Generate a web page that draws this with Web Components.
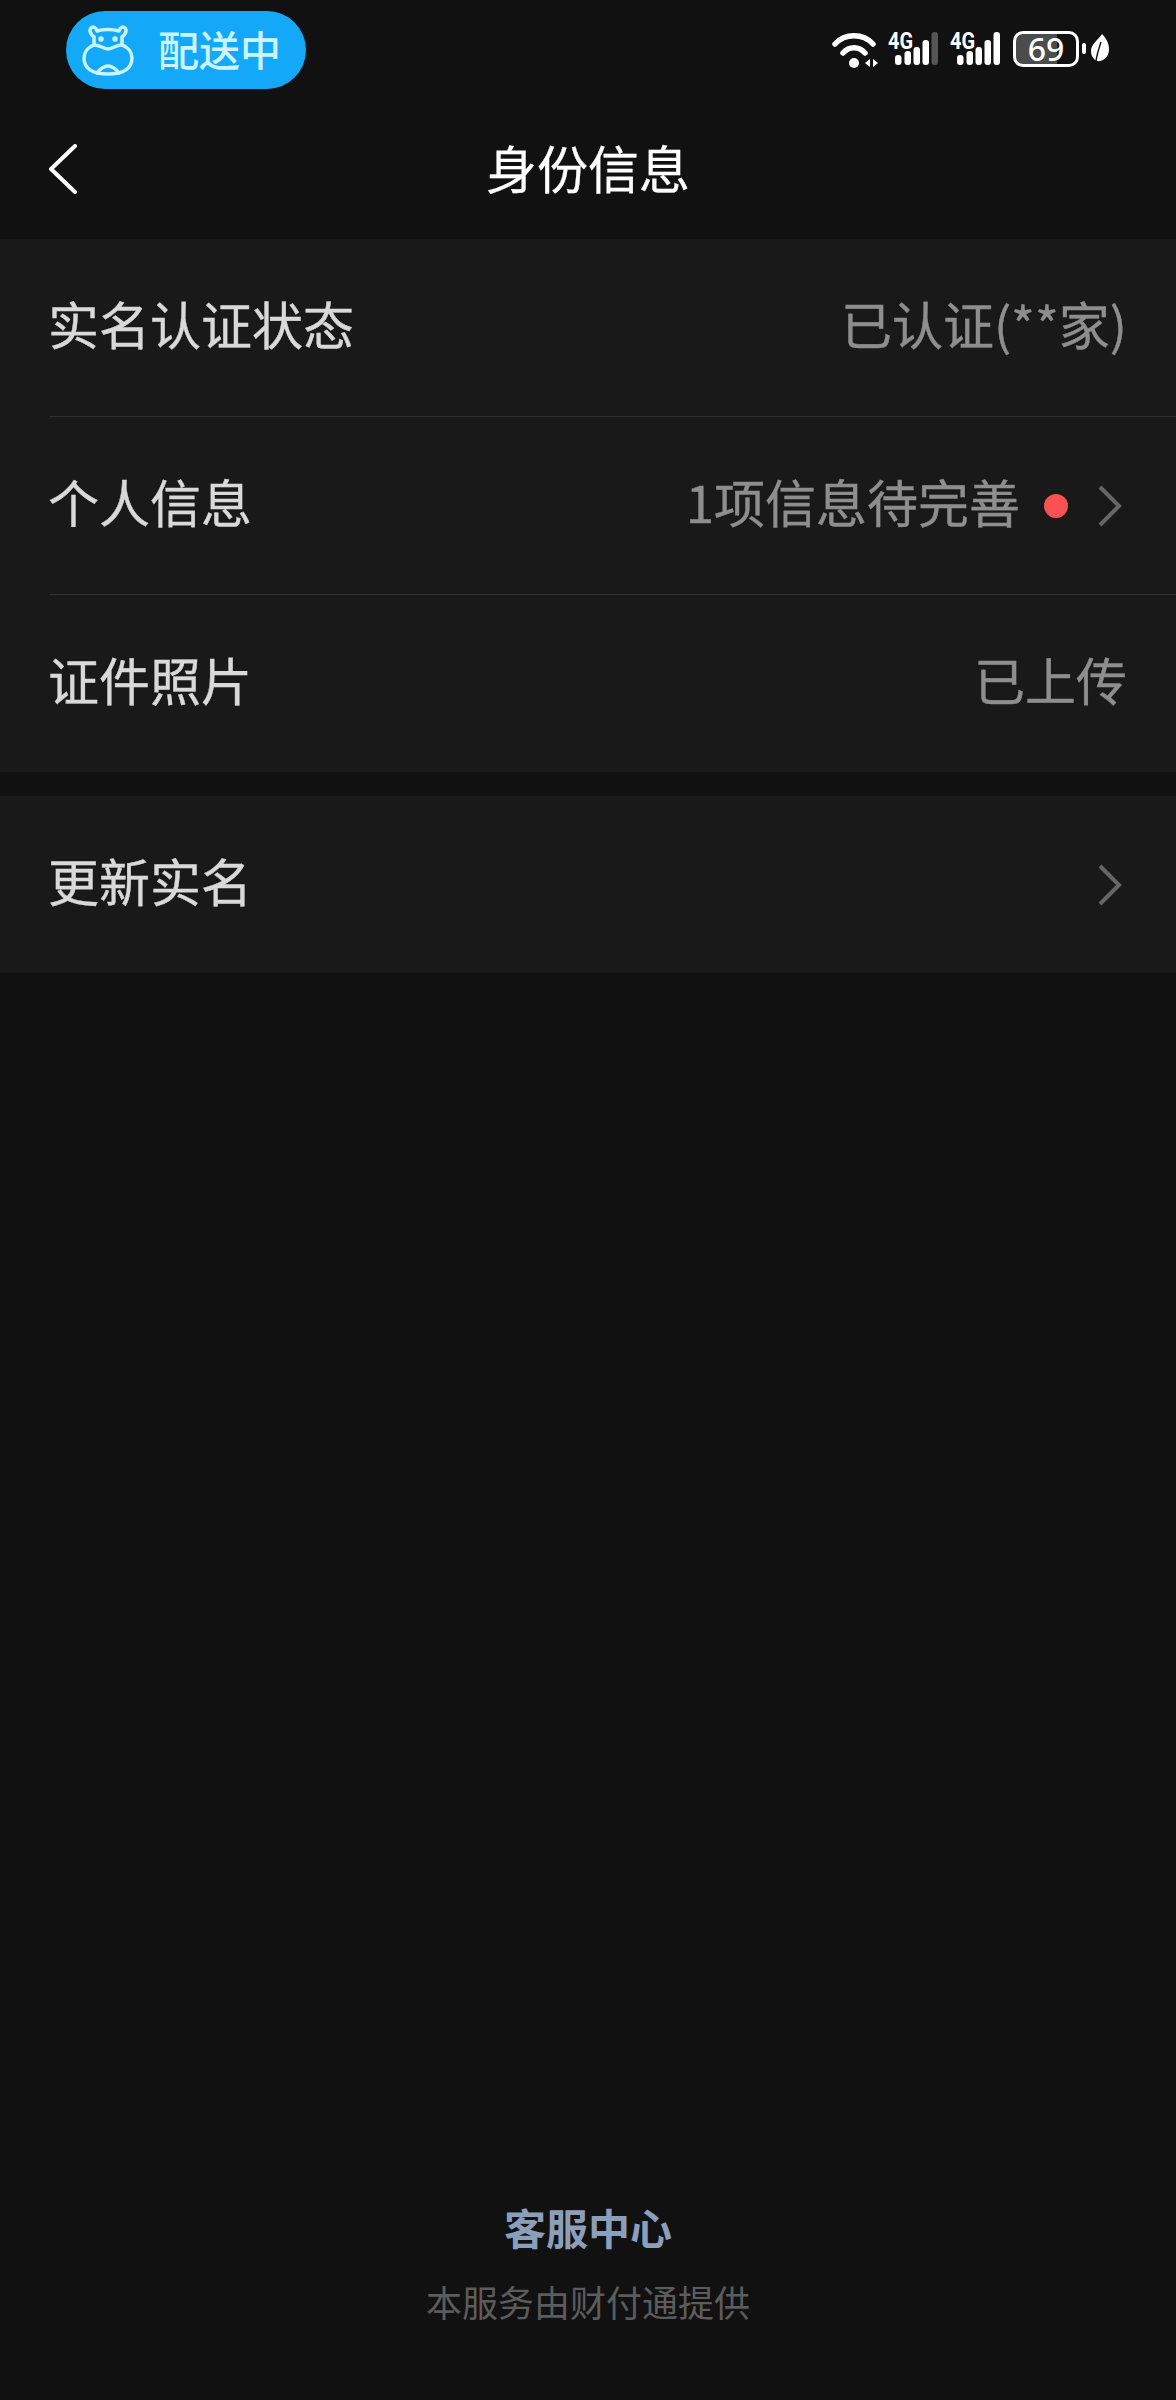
<!DOCTYPE html>
<html lang="zh">
<head>
<meta charset="utf-8">
<title>身份信息</title>
<style>
  html, body { margin: 0; background: #111112; }
  body { font-family: "Noto Sans CJK SC", "Liberation Sans", sans-serif; }
</style>
</head>
<body>
<app-page>
  <status-bar></status-bar>
  <nav-bar>身份信息</nav-bar>
  <info-card>
    <info-row label="实名认证状态">已认证(**家)</info-row>
    <info-row label="个人信息" dot arrow>1项信息待完善</info-row>
    <info-row label="证件照片" last>已上传</info-row>
  </info-card>
  <info-card>
    <info-row label="更新实名" arrow last></info-row>
  </info-card>
  <page-footer></page-footer>
</app-page>

<script>
/**
 * Outer page column.
 */
customElements.define('app-page',
  class extends HTMLElement {
    constructor () {
      super()
      this.attachShadow({ mode: 'open' }).innerHTML = `
        <style>
          :host { display: flex; flex-direction: column; height: 2400px; background: #111112; overflow: hidden; }
        </style>
        <slot></slot>`
    }
  }
)

/**
 * Phone status bar with the delivery pill and the signal icons.
 */
const signalBars = (lastColor) => `
  <svg width="52" height="42" viewBox="0 -6 52 42" style="display:block;margin-top:-6px">
    <text x="0" y="18" font-family="Roboto, sans-serif" font-size="23" font-weight="700" fill="#fff" textLength="25" lengthAdjust="spacingAndGlyphs">4G</text>
    <rect x="7" y="24" width="6.5" height="10" rx="3" fill="#fff"/>
    <rect x="16.5" y="20" width="6.5" height="14" rx="3" fill="#fff"/>
    <rect x="25.5" y="16" width="6.5" height="18" rx="3" fill="#fff"/>
    <rect x="34.5" y="9" width="6.5" height="25" rx="3" fill="#fff"/>
    <rect x="43.5" y="1" width="6.5" height="33" rx="3" fill="${lastColor}"/>
  </svg>`

customElements.define('status-bar',
  class extends HTMLElement {
    constructor () {
      super()
      this.attachShadow({ mode: 'open' }).innerHTML = `
        <style>
          :host { display: flex; justify-content: space-between; align-items: flex-start; height: 100px; box-sizing: border-box; padding: 11px 67px 0 66px; }
          .pill { display: flex; align-items: center; box-sizing: border-box; width: 240px; height: 78px; padding-left: 16px; border-radius: 39px; background: #14a9f8; color: #cdf4ff; font-size: 41px; font-weight: 500; }
          .pill svg { margin-right: 24px; }
          .pill span { padding-bottom: 5px; }
          .icons { display: flex; align-items: flex-start; padding-top: 20px; }
          .wifi { margin-right: 9px; margin-top: 1px; }
          .sim { margin-right: 10px; }
          .battery { position: relative; box-sizing: border-box; width: 66px; height: 36px; border: 3px solid #fff; border-radius: 10px; background: linear-gradient(90deg, #4c4c4c 69%, #111112 69%); color: #fff; font-family: "Noto Sans", sans-serif; font-size: 32px; font-weight: 500; line-height: 29px; text-align: center; }
          .nub { width: 4px; height: 11px; margin: 12px 5px 0 3px; border-radius: 2px; background: #fff; }
          .leaf { margin-top: 3px; }
        </style>
        <div class="pill">
          <svg width="52" height="52" viewBox="0 0 52 52" fill="none" stroke="#c8f4ff" stroke-width="3.5" stroke-linejoin="round" stroke-linecap="round">
            <path d="M12 21 V13 C8 10 7 6 9 4 C11 2 14 3 15 7 C21 5 31 5 37 7 C38 3 41 2 43 4 C45 6 44 10 40 13 V21"/>
            <path d="M12 21 C6 23 2 28 2 34 C2 44 10 50 26 50 C42 50 50 44 50 34 C50 28 46 23 40 21 C36 20 31 25 26 25 C21 25 16 20 12 21 Z"/>
            <path d="M15 49 C19 44 22 42 26 42 C30 42 33 44 37 49"/>
            <circle cx="19" cy="15" r="2" fill="#c8f4ff" stroke-width="1.5"/>
            <circle cx="33" cy="15" r="2" fill="#c8f4ff" stroke-width="1.5"/>
          </svg>
          <span>配送中</span>
        </div>
        <div class="icons">
          <svg class="wifi" width="47" height="36" viewBox="0 0 47 36" fill="none" stroke="#fff" stroke-width="5.5" stroke-linecap="round">
            <path d="M3 12 C13 1 31 1 41 12"/>
            <path d="M11 21 C17 14 27 14 33 21"/>
            <circle cx="22" cy="31" r="5" fill="#fff" stroke="none"/>
            <path d="M33 31 L38 27 V35 Z" fill="#fff" stroke="none"/>
            <path d="M41 27 L46 31 L41 35 Z" fill="#fff" stroke="none"/>
          </svg>
          <div class="sim">${signalBars('#555')}</div>
          <div class="sim" style="margin-right:11px">${signalBars('#fff')}</div>
          <div class="battery">69</div>
          <div class="nub"></div>
          <svg class="leaf" width="18" height="28" viewBox="0 0 18 28">
            <path d="M11 0 C15 4 18 9 18 15 C18 22 14 26 9 27 C4 28 0 23 0 17 C0 10 7 6 11 0 Z" fill="#fff"/>
            <path d="M5 27 C6 20 8 14 10 8" fill="none" stroke="#111112" stroke-width="1.4"/>
          </svg>
        </div>`
    }
  }
)

/**
 * Title bar with back arrow.
 */
customElements.define('nav-bar',
  class extends HTMLElement {
    constructor () {
      super()
      this.attachShadow({ mode: 'open' }).innerHTML = `
        <style>
          :host { display: flex; align-items: center; justify-content: center; position: relative; height: 139px; box-sizing: border-box; padding-bottom: 6px; color: #fff; font-size: 51px; -webkit-text-stroke: 0.3px #fff; }
          svg { position: absolute; left: 46px; top: 44px; }
        </style>
        <svg width="34" height="52" viewBox="0 0 34 52" fill="none" stroke="#fff" stroke-width="4" stroke-linecap="round" stroke-linejoin="round">
          <path d="M29 2 L5 25 L29 48"/>
        </svg>
        <slot></slot>`
    }
  }
)

/**
 * A group of rows on a lighter ground.
 */
customElements.define('info-card',
  class extends HTMLElement {
    constructor () {
      super()
      this.attachShadow({ mode: 'open' }).innerHTML = `
        <style>
          :host { display: block; background: #19191a; margin-bottom: 24px; }
        </style>
        <slot></slot>`
    }
  }
)

/**
 * One row: label on the left, value and optional dot and arrow on the right.
 */
customElements.define('info-row',
  class extends HTMLElement {
    constructor () {
      super()
      const label = this.getAttribute('label')
      const dot = this.hasAttribute('dot') ? '<span class="dot"></span>' : ''
      const arrow = this.hasAttribute('arrow')
        ? `<svg width="26" height="42" viewBox="0 0 26 42" fill="none" stroke="#666" stroke-width="4"><path d="M3 2 L22 21 L3 40"/></svg>`
        : ''
      this.attachShadow({ mode: 'open' }).innerHTML = `
        <style>
          :host { display: block; padding-left: 49px; }
          .row { display: flex; align-items: center; justify-content: space-between; box-sizing: border-box; height: 178px; padding-right: 49px; font-size: 51px; }
          :host(:not([last])) .row { border-bottom: 1px solid #2f2f30; }
          :host([last]) .row { height: 177px; }
          .label { margin-left: -1px; padding-bottom: 9px; color: #d9d9d9; -webkit-text-stroke: 0.4px #d9d9d9; }
          .value { display: flex; align-items: center; color: #8e8e8e; -webkit-text-stroke: 0.4px #8e8e8e; }
          .text { padding-bottom: 9px; }
          .dot { width: 24px; height: 24px; margin: 0 29px 0 24px; border-radius: 50%; background: #fa5252; }
          svg { margin-right: 4px; }
        </style>
        <div class="row">
          <span class="label">${label}</span>
          <span class="value"><span class="text"><slot></slot></span>${dot}${arrow}</span>
        </div>`
    }
  }
)

/**
 * Service links at the bottom of the page.
 */
customElements.define('page-footer',
  class extends HTMLElement {
    constructor () {
      super()
      this.attachShadow({ mode: 'open' }).innerHTML = `
        <style>
          :host { display: flex; flex-direction: column; align-items: center; margin-top: auto; padding-bottom: 72px; }
          .link { color: #8c9fba; font-size: 42px; font-weight: 700; line-height: 60px; }
          .note { margin-top: 17px; color: #5c5c5c; font-size: 36px; line-height: 54px; }
        </style>
        <div class="link">客服中心</div>
        <div class="note">本服务由财付通提供</div>`
    }
  }
)
</script>
</body>
</html>
